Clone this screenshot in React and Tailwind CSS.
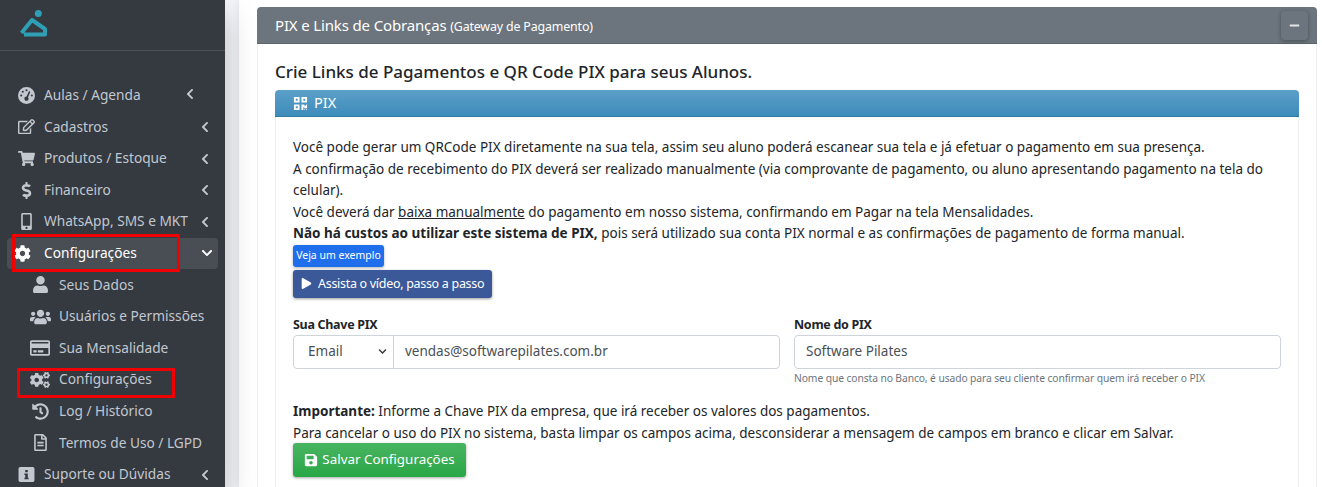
import {
  FaRegEdit, FaShoppingCart, FaDollarSign, FaMobileAlt, FaCog, FaUser, FaUsers,
  FaRegCreditCard, FaCogs, FaHistory, FaRegFileAlt, FaChevronLeft, FaChevronDown, FaQrcode, FaPlay, FaSave, FaMinus,
} from "react-icons/fa";
import { FaGaugeHigh } from "react-icons/fa6";

const font = { fontFamily: '"Noto Sans", sans-serif' };

const InfoSquare = ({ className }) => (
  <svg className={className} viewBox="0 0 16 16" fill="currentColor">
    <path fillRule="evenodd" d="M2 1h12a1.500 1.500 0 0 1 1.500 1.500v11A1.500 1.500 0 0 1 14 15H2a1.500 1.500 0 0 1-1.500-1.500v-11A1.500 1.500 0 0 1 2 1zm4.800 2.800v2h2.400v-2zM6 7v1.500h.8v2.600H6v1.400h4v-1.400h-.8V7z" />
  </svg>
);

const Logo = () => (
  <svg width="32" height="30" viewBox="0 0 32 30" fill="none">
    <circle cx="20.300" cy="4.500" r="3.500" fill="#2f9fb6" />
    <path d="M3.500 24 L14 11 L27 20 V25.500 H6" stroke="#2f9fb6" strokeWidth="4" strokeLinejoin="round" />
  </svg>
);

const NavItem = ({ icon: Icon, label, arrowClass = "right-[14px]", active, sub, iconClass = "" }) => (
  <li
    className={`relative flex h-[31.6px] items-center ${
      active ? "mx-[7px] rounded bg-white/10 text-white" : "text-[#c2c7d0]"
    } ${sub ? "pl-[59px]" : active ? "pl-[37px]" : "pl-[44px]"}`}
  >
    <span className={`absolute flex w-[22px] justify-center ${sub ? "left-[29px]" : active ? "left-[4px]" : "left-[15px]"}`}>
      <Icon className={iconClass || "h-[17px] w-[17px]"} />
    </span>
    <span className="whitespace-nowrap">{label}</span>
    {!sub &&
      (active ? (
        <FaChevronDown className="absolute right-[5px] h-[12px] w-[12px]" />
      ) : (
        <FaChevronLeft className={`absolute h-[12px] w-[12px] ${arrowClass}`} />
      ))}
  </li>
);

const Sidebar = () => (
  <aside className="relative h-[487px] w-[225px] shrink-0 overflow-hidden bg-[#343a40] text-[13.7px] shadow-[0_14px_28px_rgba(0,0,0,.25)]">
    <div className="flex h-[51px] items-start border-b border-[#4b545c] pl-[18px] pt-[9px]">
      <Logo />
    </div>
    <ul className="pt-[28.6px]">
      <NavItem icon={FaGaugeHigh} label="Aulas / Agenda" arrowClass="right-[29px] -mt-[2px]" />
      <NavItem icon={FaRegEdit} label="Cadastros" />
      <NavItem icon={FaShoppingCart} label="Produtos / Estoque" />
      <NavItem icon={FaDollarSign} label="Financeiro" />
      <NavItem icon={FaMobileAlt} label="WhatsApp, SMS e MKT" />
      <NavItem icon={FaCog} label="Configurações" active />
      <NavItem icon={FaUser} label="Seus Dados" sub />
      <NavItem icon={FaUsers} label="Usuários e Permissões" sub iconClass="h-[18px] w-[21px]" />
      <NavItem icon={FaRegCreditCard} label="Sua Mensalidade" sub iconClass="h-[18px] w-[20px]" />
      <NavItem icon={FaCogs} label="Configurações" sub iconClass="h-[18px] w-[20px]" />
      <NavItem icon={FaHistory} label="Log / Histórico" sub />
      <NavItem icon={FaRegFileAlt} label="Termos de Uso / LGPD" sub />
      <NavItem icon={InfoSquare} label="Suporte ou Dúvidas" />
    </ul>
    {/* marcações vermelhas */}
    <div className="absolute left-[12px] top-[234px] h-[38px] w-[168px] border-[3px] border-[#f00000]" />
    <div className="absolute left-[17px] top-[368px] h-[30px] w-[158px] border-[3px] border-[#f00000]" />
  </aside>
);

const Main = () => (
  <main className="min-w-0 flex-1 pl-[14px]">
    <div className="h-[487px] overflow-hidden bg-white pl-[18px] pr-[5px] pt-[7px] shadow-[-1px_0_6px_rgba(0,0,0,.08)]">
      <div className="rounded-t bg-white">
        <div className="flex h-[37px] items-center justify-between rounded-t border-b border-[#5d646b] bg-[#6c757d] pl-[18px] pr-[9px] text-white">
          <div className="whitespace-nowrap text-[15px] tracking-[-0.15px]">
            PIX e Links de Cobranças <span className="text-[12.4px]">(Gateway de Pagamento)</span>
          </div>
          <button className="flex h-[29px] w-[27px] items-center justify-center rounded bg-[#6c757d] shadow-[0_1px_4px_rgba(0,0,0,.35)]">
            <FaMinus className="h-[11px] w-[11px] text-[#e4e6e8]" />
          </button>
        </div>
        <div className="h-[450px] border-x border-[#eceef0] px-[17px] pt-[18px] text-[#212529]">
          <h5 className="text-[17px] font-medium leading-[20px]">
            Crie Links de Pagamentos e QR Code PIX para seus Alunos.
          </h5>
          <div className="mt-[8px] rounded-t">
            <div className="flex h-[27px] items-center gap-[6px] rounded-t border-b border-[#357ca5] bg-gradient-to-b from-[#5ba0c9] to-[#3d8bba] pl-[18px] text-[14.5px] text-white">
              <FaQrcode className="h-[15px] w-[15px]" />
              PIX
            </div>
            <div className="h-[400px] border-x border-[#eceef0] px-[17px] pt-[20px] text-[13.5px] leading-[21.6px]">
              <p className="whitespace-nowrap">
                Você pode gerar um QRCode PIX diretamente na sua tela, assim seu aluno poderá escanear sua tela e já efetuar o pagamento em sua presença.
                <br />
                A confirmação de recebimento do PIX deverá ser realizado manualmente (via comprovante de pagamento, ou aluno apresentando pagamento na tela do
                <br />
                celular).
                <br />
                Você deverá dar <u>baixa manualmente</u> do pagamento em nosso sistema, confirmando em Pagar na tela Mensalidades.
                <br />
                <b>Não há custos ao utilizar este sistema de PIX,</b> pois será utilizado sua conta PIX normal e as confirmações de pagamento de forma manual.
              </p>
              <button className="block h-[22px] w-[91px] whitespace-nowrap rounded-[3px] bg-[#1f6fed] text-[10.5px] text-white shadow-[0_1px_3px_rgba(0,0,0,.3)]">
                Veja um exemplo
              </button>
              <button className="mt-[3px] flex h-[28px] w-[199px] items-center gap-[6px] whitespace-nowrap rounded-[3px] bg-[#3b5998] pl-[8px] text-[12.5px] tracking-[-0.3px] text-white shadow-[0_1px_3px_rgba(0,0,0,.4)]">
                <FaPlay className="h-[11px] w-[11px]" />
                Assista o vídeo, passo a passo
              </button>
              <div className="mt-[16px] flex gap-[14px]">
                <div className="w-[487px]">
                  <label className="block text-[12.5px] font-bold leading-[21px] tracking-[-0.3px]">Sua Chave PIX</label>
                  <div className="flex h-[34px] text-[#495057]">
                    <div className="relative flex w-[101px] items-center rounded-l border border-[#ced4da] pl-[14px]">
                      Email
                      <FaChevronDown className="absolute right-[6px] h-[9px] w-[9px] text-[#343a40]" />
                    </div>
                    <div className="-ml-px flex flex-1 items-center rounded-r border border-[#ced4da] pl-[11px]">
                      vendas@softwarepilates.com.br
                    </div>
                  </div>
                </div>
                <div className="flex-1">
                  <label className="block text-[12.5px] font-bold leading-[21px] tracking-[-0.3px]">Nome do PIX</label>
                  <div className="flex h-[34px] items-center rounded border border-[#ced4da] pl-[11px] text-[#495057]">
                    Software Pilates
                  </div>
                  <div className="mt-[2px] text-[10.3px] leading-[14px] tracking-[-0.1px] text-[#6c757d]">
                    Nome que consta no Banco, é usado para seu cliente confirmar quem irá receber o PIX
                  </div>
                </div>
              </div>
              <p className="mt-[16px] whitespace-nowrap">
                <b>Importante:</b> Informe a Chave PIX da empresa, que irá receber os valores dos pagamentos.
                <br />
                Para cancelar o uso do PIX no sistema, basta limpar os campos acima, desconsiderar a mensagem de campos em branco e clicar em Salvar.
              </p>
              <button className="-mt-[1px] flex h-[34px] w-[173px] items-center justify-center gap-[4px] whitespace-nowrap rounded-[3px] bg-gradient-to-b from-[#48b461] to-[#28a745] text-[13.4px] text-white shadow-[0_1px_3px_rgba(0,0,0,.35)]">
                <FaSave className="h-[14px] w-[14px]" />
                Salvar Configurações
              </button>
            </div>
          </div>
        </div>
      </div>
    </div>
  </main>
);

export default function App() {
  return (
    <div className="flex h-[487px] w-[1322px] overflow-hidden bg-[#f4f6f9]" style={font}>
      <Sidebar />
      <Main />
    </div>
  );
}
